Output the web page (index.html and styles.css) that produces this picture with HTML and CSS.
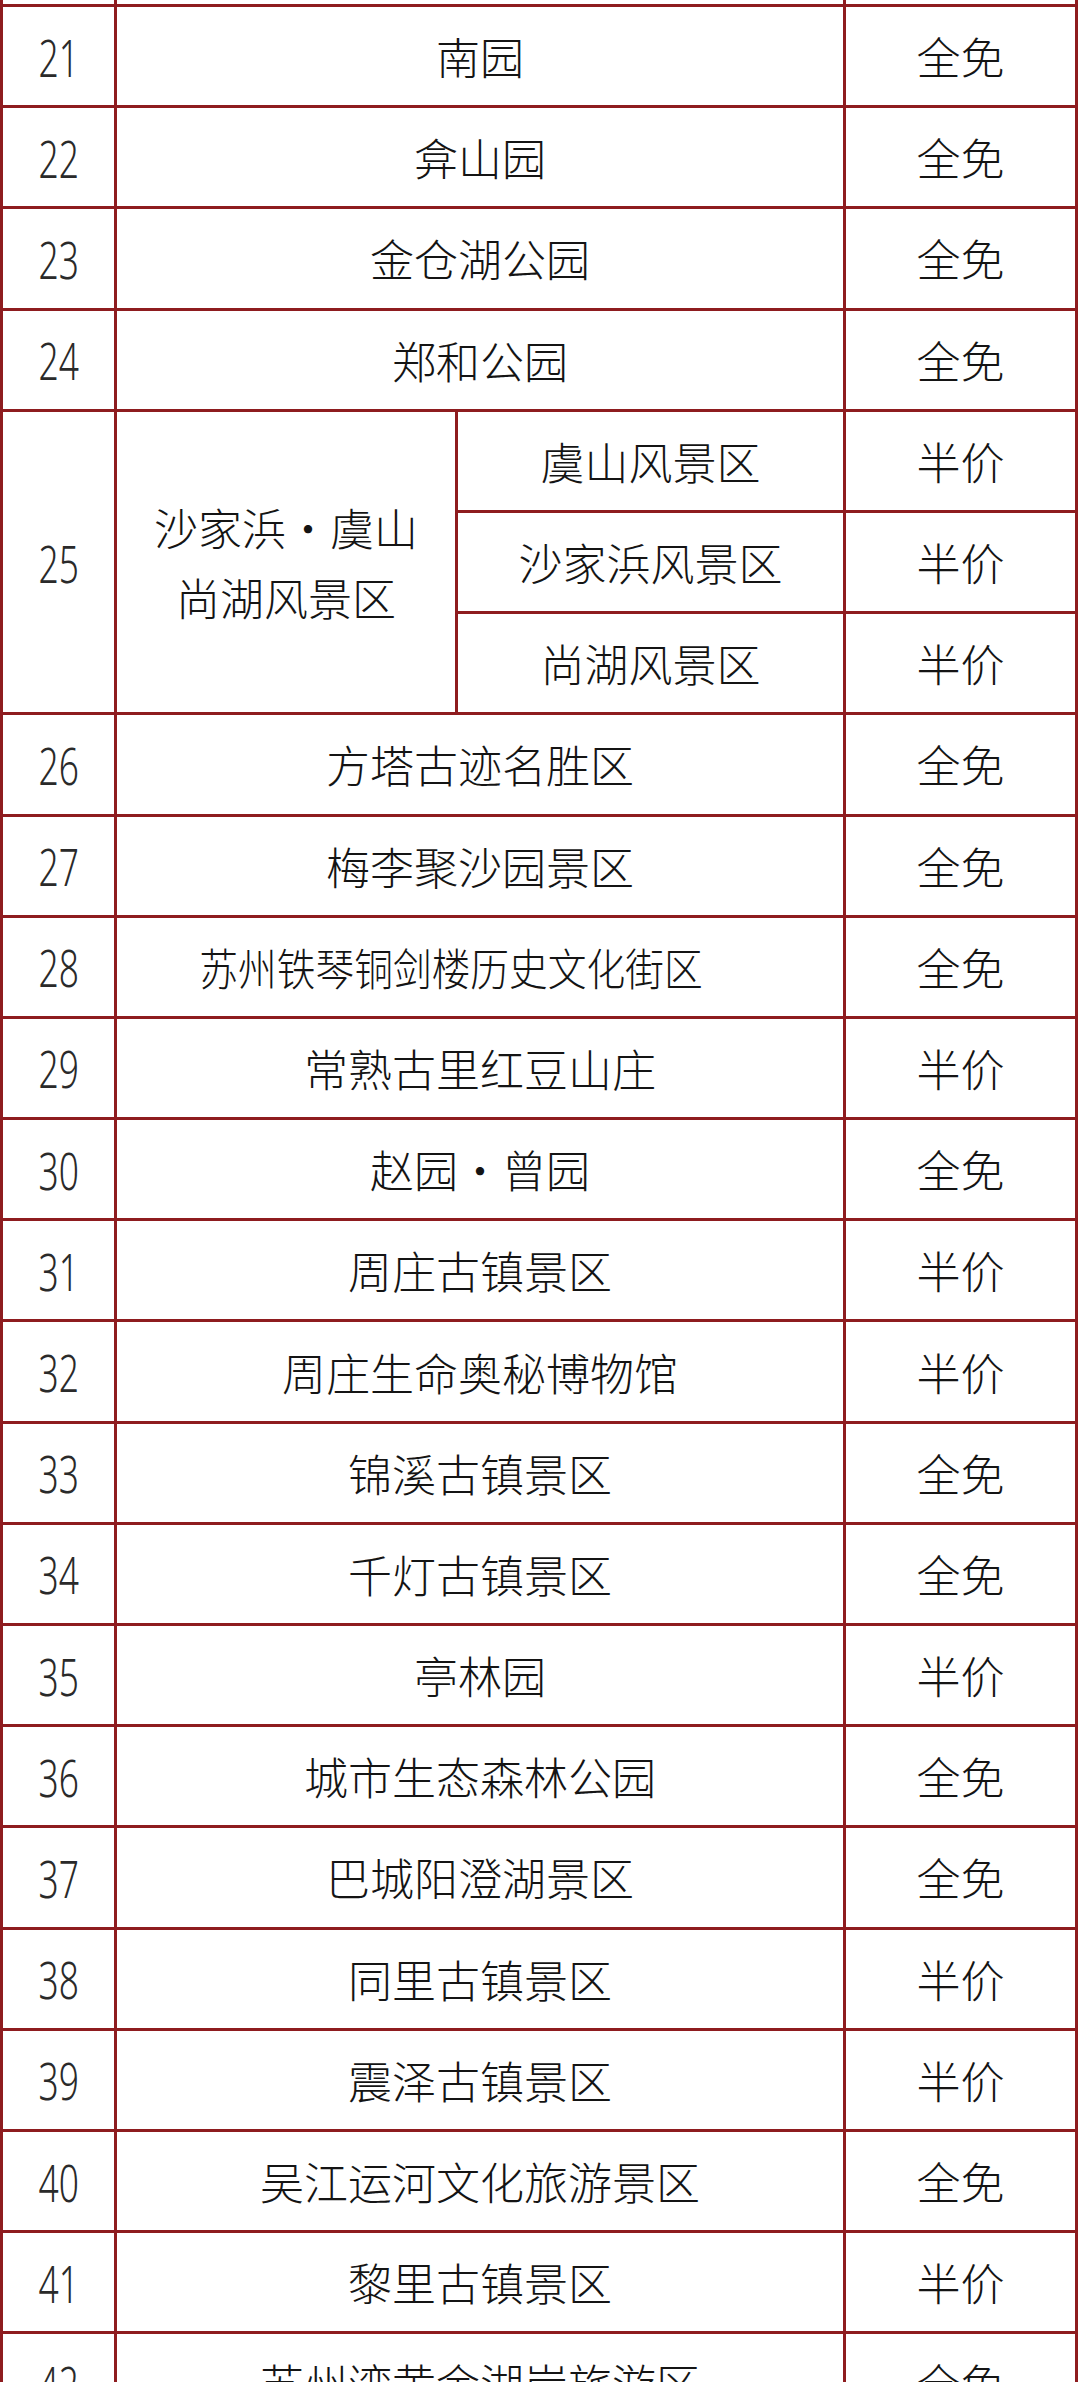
FILE: index.html
```html
<!DOCTYPE html>
<html lang="zh-CN">
<head>
<meta charset="utf-8">
<title>景区优惠名单</title>
<link rel="stylesheet" href="styles.css">
</head>
<body>
<div class="sheet">
  <div class="grid">
    <div class="cell stub"></div><div class="cell stub wide"></div><div class="cell stub"></div>

    <div class="cell num"><span class="digits">21</span></div><div class="cell name wide">南园</div><div class="cell price">全免</div>
    <div class="cell num"><span class="digits">22</span></div><div class="cell name wide">弇山园</div><div class="cell price">全免</div>
    <div class="cell num"><span class="digits">23</span></div><div class="cell name wide">金仓湖公园</div><div class="cell price">全免</div>
    <div class="cell num"><span class="digits">24</span></div><div class="cell name wide">郑和公园</div><div class="cell price">全免</div>

    <div class="cell num span3"><span class="digits">25</span></div>
    <div class="cell name group span3"><span>沙家浜・虞山<br>尚湖风景区</span></div>
    <div class="cell name">虞山风景区</div><div class="cell price">半价</div>
    <div class="cell name">沙家浜风景区</div><div class="cell price">半价</div>
    <div class="cell name">尚湖风景区</div><div class="cell price">半价</div>

    <div class="cell num"><span class="digits">26</span></div><div class="cell name wide">方塔古迹名胜区</div><div class="cell price">全免</div>
    <div class="cell num"><span class="digits">27</span></div><div class="cell name wide">梅李聚沙园景区</div><div class="cell price">全免</div>
    <div class="cell num"><span class="digits">28</span></div><div class="cell name wide tight"><span class="squeeze">苏州铁琴铜剑楼历史文化街区</span></div><div class="cell price">全免</div>
    <div class="cell num"><span class="digits">29</span></div><div class="cell name wide">常熟古里红豆山庄</div><div class="cell price">半价</div>
    <div class="cell num"><span class="digits">30</span></div><div class="cell name wide">赵园・曾园</div><div class="cell price">全免</div>
    <div class="cell num"><span class="digits">31</span></div><div class="cell name wide">周庄古镇景区</div><div class="cell price">半价</div>
    <div class="cell num"><span class="digits">32</span></div><div class="cell name wide">周庄生命奥秘博物馆</div><div class="cell price">半价</div>
    <div class="cell num"><span class="digits">33</span></div><div class="cell name wide">锦溪古镇景区</div><div class="cell price">全免</div>
    <div class="cell num"><span class="digits">34</span></div><div class="cell name wide">千灯古镇景区</div><div class="cell price">全免</div>
    <div class="cell num"><span class="digits">35</span></div><div class="cell name wide">亭林园</div><div class="cell price">半价</div>
    <div class="cell num"><span class="digits">36</span></div><div class="cell name wide">城市生态森林公园</div><div class="cell price">全免</div>
    <div class="cell num"><span class="digits">37</span></div><div class="cell name wide">巴城阳澄湖景区</div><div class="cell price">全免</div>
    <div class="cell num"><span class="digits">38</span></div><div class="cell name wide">同里古镇景区</div><div class="cell price">半价</div>
    <div class="cell num"><span class="digits">39</span></div><div class="cell name wide">震泽古镇景区</div><div class="cell price">半价</div>
    <div class="cell num"><span class="digits">40</span></div><div class="cell name wide">吴江运河文化旅游景区</div><div class="cell price">全免</div>
    <div class="cell num"><span class="digits">41</span></div><div class="cell name wide">黎里古镇景区</div><div class="cell price">半价</div>
    <div class="cell num"><span class="digits">42</span></div><div class="cell name wide">苏州湾黄金湖岸旅游区</div><div class="cell price">全免</div>
  </div>
</div>
</body>
</html>
```

FILE: styles.css
```css
html, body {
  margin: 0;
  padding: 0;
  background: #ffffff;
}

body {
  width: 1080px;
  height: 2382px;
  overflow: hidden;
}

.sheet {
  width: 1080px;
}

.grid {
  display: grid;
  width: 1078px;
  box-sizing: border-box;
  grid-template-columns: 111px 338px 385px 229px;
  grid-template-rows: 4px;
  grid-auto-rows: 98.2px;
  gap: 3px;
  padding: 0 3px;
  background: #8e1c1f;
}

.cell {
  background: #ffffff;
  display: flex;
  align-items: center;
  justify-content: center;
  font-family: "Noto Sans CJK SC", "Noto Sans", sans-serif;
  font-weight: 300;
  font-size: 44px;
  color: #141414;
  white-space: nowrap;
  overflow: hidden;
}

.wide {
  grid-column: span 2;
}

.span3 {
  grid-row: span 3;
}

.group {
  text-align: center;
  line-height: 70px;
}

.tight {
  padding-right: 58px;
}

.squeeze {
  display: inline-block;
  transform: scaleX(0.88);
}

.digits {
  display: inline-block;
  font-family: "Noto Sans", "Open Sans", sans-serif;
  font-weight: 300;
  font-size: 52px;
  color: #2a2a2a;
  transform: scaleX(0.68);
}
```
